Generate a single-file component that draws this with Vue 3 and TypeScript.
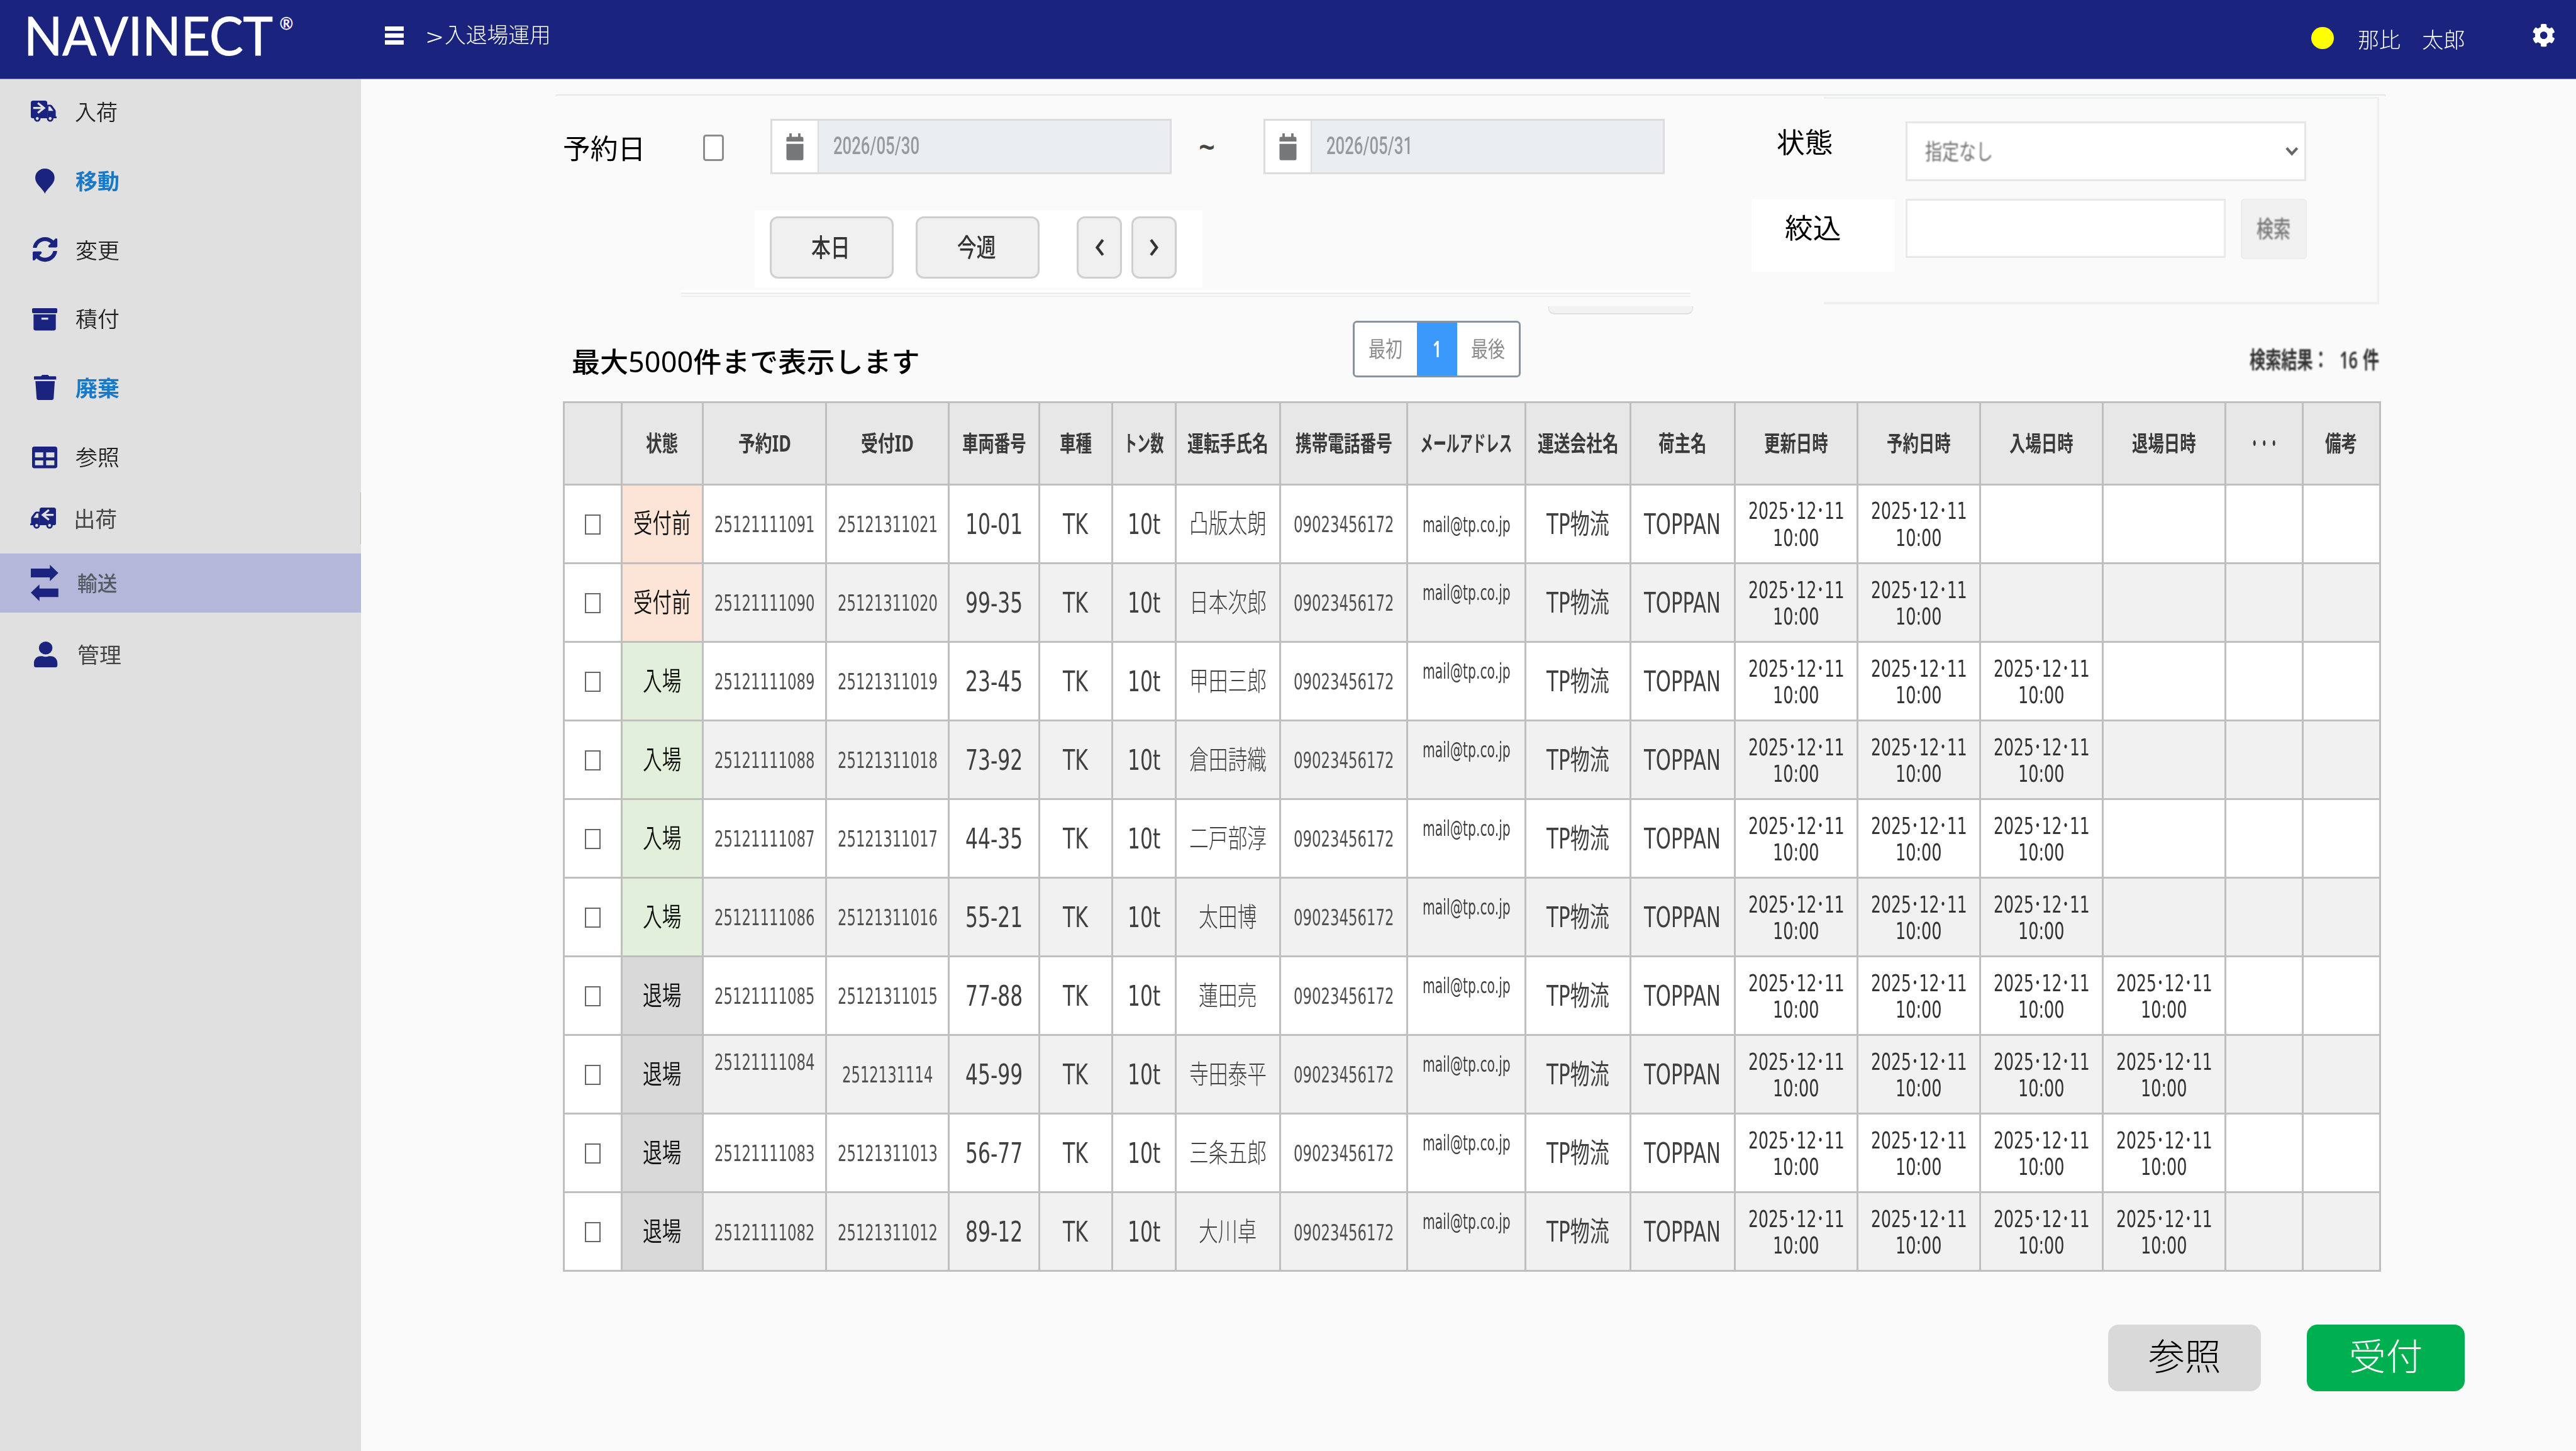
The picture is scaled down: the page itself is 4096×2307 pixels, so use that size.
<script setup lang="ts">
import type { Directive } from 'vue'

// The page is designed on a 4395-unit wide canvas; 1rem equals 100 units.
const UNIT = 4096 / 4395

// Condenses or widens a text run to a given width in canvas units.
const applyFit = (el: HTMLElement, units: number) => {
  el.style.transform = 'none'
  el.style.marginRight = '0'
  const natural = el.getBoundingClientRect().width
  if (!natural) return
  const target = units * UNIT
  el.style.transform = `scaleX(${target / natural})`
  el.style.marginRight = `${target - natural}px`
}
const vFit: Directive<HTMLElement, number> = {
  mounted(el, binding) {
    el.classList.add('fit')
    applyFit(el, binding.value)
    requestAnimationFrame(() => applyFit(el, binding.value))
  },
}

interface MenuItem {
  id: string
  label: string
  height: number
  icon: { x: number; w: number; h: number; dy: number }
  text: { x: number; w: number; dy: number }
  kind?: string
}
const menu: MenuItem[] = [
  { id: 'in', label: '入荷', height: 117, icon: { x: 53, w: 44, h: 36, dy: -4 }, text: { x: 128, w: 73, dy: -2 } },
  { id: 'pin', label: '移動', height: 118, icon: { x: 60, w: 33, h: 43, dy: -2 }, text: { x: 129, w: 75, dy: -2 }, kind: 'link' },
  { id: 'sync', label: '変更', height: 118, icon: { x: 56, w: 42, h: 42, dy: -3 }, text: { x: 129, w: 75, dy: -2 } },
  { id: 'box', label: '積付', height: 117, icon: { x: 55, w: 43, h: 38, dy: -2 }, text: { x: 129, w: 75, dy: -2 } },
  { id: 'trash', label: '廃棄', height: 117, icon: { x: 58, w: 38, h: 43, dy: -2 }, text: { x: 129, w: 75, dy: -1 }, kind: 'link' },
  { id: 'grid', label: '参照', height: 118, icon: { x: 55, w: 43, h: 37, dy: -1 }, text: { x: 129, w: 75, dy: -1 } },
  { id: 'out', label: '出荷', height: 104, icon: { x: 51, w: 44, h: 36, dy: -8 }, text: { x: 126, w: 74, dy: -7 }, kind: 'soft' },
  { id: 'swap', label: '輸送', height: 101, icon: { x: 53, w: 47, h: 62, dy: 0 }, text: { x: 132, w: 68, dy: 2 }, kind: 'active' },
  { id: 'user', label: '管理', height: 148, icon: { x: 58, w: 40, h: 44, dy: -3 }, text: { x: 132, w: 75, dy: -2 }, kind: 'soft' },
]

const edges = [962.4, 1060.7, 1200, 1409.7, 1618.7, 1774, 1898, 2006.4, 2185, 2401.8, 2603.3, 2781.9, 2960, 3169.3, 3378.7, 3588, 3797, 3929, 4061]
const colWidths = edges.slice(1).map((e, i) => Math.round(e * UNIT) - Math.round(edges[i] * UNIT))
const tableWidth = colWidths.reduce((a, b) => a + b, 0)

const heads: [string, number][] = [
  ['', 0], ['状態', 55], ['予約ID', 90], ['受付ID', 90], ['車両番号', 109], ['車種', 55], ['トン数', 68],
  ['運転手氏名', 138], ['携帯電話番号', 165], ['メールアドレス', 157], ['運送会社名', 138], ['荷主名', 82],
  ['更新日時', 109], ['予約日時', 109], ['入場日時', 109], ['退場日時', 109], ['・・・', 50], ['備考', 55],
]

type Status = 'before' | 'entered' | 'left'
const statusText: Record<Status, [string, number]> = {
  before: ['受付前', 98],
  entered: ['入場', 66],
  left: ['退場', 66],
}
interface Row { status: Status; id: string; rid: string; plate: string; driver: string; stamps: number }
const rows: Row[] = [
  { status: 'before', id: '25121111091', rid: '25121311021', plate: '10-01', driver: '凸版太朗', stamps: 2 },
  { status: 'before', id: '25121111090', rid: '25121311020', plate: '99-35', driver: '日本次郎', stamps: 2 },
  { status: 'entered', id: '25121111089', rid: '25121311019', plate: '23-45', driver: '甲田三郎', stamps: 3 },
  { status: 'entered', id: '25121111088', rid: '25121311018', plate: '73-92', driver: '倉田詩織', stamps: 3 },
  { status: 'entered', id: '25121111087', rid: '25121311017', plate: '44-35', driver: '二戸部淳', stamps: 3 },
  { status: 'entered', id: '25121111086', rid: '25121311016', plate: '55-21', driver: '太田博', stamps: 3 },
  { status: 'left', id: '25121111085', rid: '25121311015', plate: '77-88', driver: '蓮田亮', stamps: 4 },
  { status: 'left', id: '25121111084', rid: '2512131114', plate: '45-99', driver: '寺田泰平', stamps: 4 },
  { status: 'left', id: '25121111083', rid: '25121311013', plate: '56-77', driver: '三条五郎', stamps: 4 },
  { status: 'left', id: '25121111082', rid: '25121311012', plate: '89-12', driver: '大川卓', stamps: 4 },
]
const rem = (n: number) => `${n / 100}rem`
</script>

<template>
  <div class="app">
    <header class="bar">
      <div class="logo"><span v-fit="425" class="logo-name">NAVINECT</span><span class="logo-mark">®</span></div>
      <div class="burger"><i></i><i></i><i></i></div>
      <span v-fit="28" class="gt">&gt;</span>
      <span v-fit="181" class="crumb">入退場運用</span>
      <div class="account">
        <span class="dot"></span>
        <span v-fit="183" class="crumb">那比　太郎</span>
        <svg class="gear" viewBox="12 8 488 496" preserveAspectRatio="none"><path fill="#fff" d="M487.400 315.700l-42.600-24.600c4.300-23.200 4.300-47 0-70.200l42.600-24.600c4.900-2.800 7.100-8.600 5.500-14-11.100-35.600-30-67.800-54.700-94.600-3.800-4.100-10-5.100-14.800-2.300L380.800 110c-17.900-15.400-38.500-27.300-60.800-35.100V25.800c0-5.600-3.900-10.500-9.400-11.700-36.700-8.200-74.300-7.800-109.200 0-5.500 1.200-9.400 6.100-9.400 11.700V75c-22.200 7.900-42.800 19.800-60.800 35.100L88.700 85.500c-4.900-2.800-11-1.900-14.800 2.300-24.700 26.700-43.600 58.900-54.700 94.600-1.700 5.400.6 11.200 5.500 14L67.300 221c-4.300 23.200-4.300 47 0 70.200l-42.600 24.600c-4.900 2.800-7.100 8.600-5.500 14 11.100 35.600 30 67.800 54.700 94.600 3.800 4.100 10 5.100 14.800 2.300l42.600-24.600c17.900 15.400 38.500 27.300 60.800 35.100v49.200c0 5.600 3.900 10.500 9.400 11.700 36.700 8.200 74.300 7.800 109.200 0 5.500-1.200 9.400-6.100 9.400-11.700v-49.200c22.200-7.900 42.800-19.800 60.800-35.100l42.600 24.600c4.900 2.800 11 1.900 14.800-2.300 24.700-26.700 43.600-58.900 54.700-94.600 1.500-5.500-.7-11.300-5.600-14.100zM256 336c-44.100 0-80-35.900-80-80s35.900-80 80-80 80 35.900 80 80-35.900 80-80 80z" /></svg>
      </div>
    </header>

    <div class="body">
      <aside class="side">
        <div v-for="m in menu" :key="m.id" class="item" :class="m.kind" :style="{ height: rem(m.height) }">
          <div class="slot" :style="{ width: rem(m.text.x), paddingLeft: rem(m.icon.x), marginTop: rem(m.icon.dy * 2) }">
            <svg :style="{ width: rem(m.icon.w), height: rem(m.icon.h) }" :viewBox="`0 0 ${m.icon.w} ${m.icon.h}`" fill="#1a237e">
              <g v-if="m.id === 'in' || m.id === 'out'" :transform="m.id === 'out' ? 'translate(44 0) scale(-1 1)' : undefined">
                <path d="M4 0h20a4 4 0 0 1 4 4v26H3a3 3 0 0 1-3-3V4a4 4 0 0 1 4-4z" />
                <path d="M28 7h4.500c1.800 0 3.200.7 4.300 2l4.600 6.300c.8 1 1.100 2 1.100 3.200V27h1.500v3H28z" />
                <path fill="#e0e0e0" d="M30 10h3l5.500 7.500H30z" />
                <circle cx="11" cy="30.500" r="5.500" /><circle cx="33" cy="30.500" r="5.500" />
                <circle cx="11" cy="30.500" r="2.500" fill="#e0e0e0" /><circle cx="33" cy="30.500" r="2.500" fill="#e0e0e0" />
                <path d="M4 12.500h18M12 4l10.500 8.500L12 21" fill="none" stroke="#e0e0e0" stroke-width="3.600" />
              </g>
              <path v-else-if="m.id === 'pin'" d="M16.500 43C14 35 0 27 0 16A16.500 16 0 0 1 33 16C33 27 19 35 16.500 43z" />
              <svg v-else-if="m.id === 'sync'" viewBox="8 8 496 496"><path d="M370.720 133.280C339.458 104.008 298.888 87.962 255.848 88c-77.458.068-144.328 53.178-162.791 126.850-1.344 5.363-6.122 9.150-11.651 9.150H24.103c-7.498 0-13.194-6.807-11.807-14.176C33.933 94.924 134.813 8 256 8c66.448 0 126.791 26.136 171.315 68.685L463.030 40.970C478.149 25.851 504 36.559 504 57.941V192c0 13.255-10.745 24-24 24H345.941c-21.382 0-32.090-25.851-16.971-40.971l41.750-41.749zM32 296h134.059c21.382 0 32.090 25.851 16.971 40.971l-41.750 41.750c31.262 29.273 71.835 45.319 114.876 45.280 77.418-.07 144.315-53.144 162.787-126.849 1.344-5.363 6.122-9.150 11.651-9.150h57.304c7.498 0 13.194 6.807 11.807 14.176C478.067 417.076 377.187 504 256 504c-66.448 0-126.791-26.136-171.315-68.685L48.970 471.030C33.851 486.149 8 475.441 8 454.059V320c0-13.255 10.745-24 24-24z" /></svg>
              <g v-else-if="m.id === 'box'">
                <rect width="43" height="8.500" rx="2" />
                <path fill-rule="evenodd" d="M2.500 10.500h38V35a3 3 0 0 1-3 3h-32a3 3 0 0 1-3-3zM16 16v3.500h11.500V16z" />
              </g>
              <g v-else-if="m.id === 'trash'">
                <path d="M1.500 2.500H12L13.500 .6c.4-.4.800-.6 1.400-.6h8.200c.6 0 1 .2 1.400.6L26 2.500h10.500a1.500 1.500 0 0 1 1.500 1.500v4H0V4a1.500 1.500 0 0 1 1.500-1.500z" />
                <path d="M2.500 10.700h33L33.600 40a3.500 3.500 0 0 1-3.500 3H8a3.500 3.500 0 0 1-3.500-3z" />
              </g>
              <path v-else-if="m.id === 'grid'" fill-rule="evenodd" d="M4 0h35a4 4 0 0 1 4 4v29a4 4 0 0 1-4 4H4a4 4 0 0 1-4-4V4a4 4 0 0 1 4-4zM5 10v8.500h14V10zM24 10v8.500h14V10zM5 23.500V32h14v-8.500zM24 23.500V32h14v-8.500z" />
              <path v-else-if="m.id === 'swap'" d="M0 6.500h32.500V0L47 14 32.500 28v-6.500H0zM47 40.500H14.700v-7L0 47.500 14.700 62v-7H47z" />
              <g v-else>
                <ellipse cx="20" cy="11" rx="11.500" ry="11" />
                <path d="M11.500 25h3c3.500 1.500 7.500 1.500 11 0h3C35 25 40 30 40 36.500v4a3.500 3.500 0 0 1-3.500 3.500h-33A3.500 3.500 0 0 1 0 40.500v-4C0 30 5 25 11.500 25z" />
              </g>
            </svg>
          </div>
          <span v-fit="m.text.w" class="item-text" :style="{ marginTop: rem(m.text.dy * 2) }">{{ m.label }}</span>
        </div>
      </aside>

      <main class="main">
        <div class="rule"></div>
        <section class="filters">
          <div class="left">
            <div class="date-row">
              <span v-fit="141" class="label">予約日</span>
              <span class="check"></span>
              <div class="date">
                <div class="cal"><svg viewBox="0 0 29 46"><path d="M5 0h4v6h11V0h4v6h2a3 3 0 0 1 3 3v5H0V9a3 3 0 0 1 3-3h2zM0 18h29v25a3 3 0 0 1-3 3H3a3 3 0 0 1-3-3z" /></svg></div>
                <div class="val"><span v-fit="147">2026/05/30</span></div>
              </div>
              <span class="tilde">~</span>
              <div class="date second">
                <div class="cal"><svg viewBox="0 0 29 46"><path d="M5 0h4v6h11V0h4v6h2a3 3 0 0 1 3 3v5H0V9a3 3 0 0 1 3-3h2zM0 18h29v25a3 3 0 0 1-3 3H3a3 3 0 0 1-3-3z" /></svg></div>
                <div class="val"><span v-fit="147">2026/05/31</span></div>
              </div>
            </div>
            <div class="quick">
              <button class="btn wide"><span v-fit="66">本日</span></button>
              <button class="btn wide week"><span v-fit="66">今週</span></button>
              <button class="btn slim"><svg viewBox="0 0 16 30"><path d="M13.500 2.500L4 15l9.500 12.500" /></svg></button>
              <button class="btn slim next"><svg viewBox="0 0 16 30"><path d="M2.500 2.500L12 15 2.500 27.500" /></svg></button>
            </div>
            <div class="strip"></div>
          </div>
          <div class="right">
            <div class="cond">
              <div class="cond-label"><span v-fit="96" class="label">状態</span></div>
              <div class="select"><span v-fit="116">指定なし</span><svg viewBox="0 0 22 16"><path d="M2 2.500L11 12.500 20 2.500" /></svg></div>
            </div>
            <div class="cond second-cond">
              <div class="cond-label box"><span v-fit="96" class="label">絞込</span></div>
              <div class="input"></div>
              <button class="find"><span v-fit="58">検索</span></button>
            </div>
          </div>
        </section>

        <div class="stub"></div>
        <div class="tools">
          <span v-fit="594" class="notice">最大5000件まで表示します</span>
          <div class="pager">
            <div class="pg"><span v-fit="58">最初</span></div>
            <div class="pg on"><span v-fit="15">1</span></div>
            <div class="pg"><span v-fit="58">最後</span></div>
          </div>
          <div class="count"><span v-fit="135">検索結果：</span><span v-fit="31" class="hits">16</span><span v-fit="28">件</span></div>
        </div>

        <table class="list" :style="{ width: tableWidth + 'px' }">
          <colgroup><col v-for="(w, i) in colWidths" :key="i" :style="{ width: w + 'px' }" /></colgroup>
          <thead>
            <tr>
              <th v-for="(h, i) in heads" :key="i"><div class="cell"><span v-if="h[0]" v-fit="h[1]">{{ h[0] }}</span></div></th>
            </tr>
          </thead>
          <tbody>
            <tr v-for="(r, i) in rows" :key="r.id">
              <td class="pick"><div class="cell"><span class="tick"></span></div></td>
              <td :class="r.status"><div class="cell st"><span v-fit="statusText[r.status][1]">{{ statusText[r.status][0] }}</span></div></td>
              <td><div class="cell num" :class="{ raised: i === 7 }"><span v-fit="171">{{ r.id }}</span></div></td>
              <td><div class="cell num"><span v-fit="r.rid.length * 15.5">{{ r.rid }}</span></div></td>
              <td><div class="cell big"><span v-fit="98">{{ r.plate }}</span></div></td>
              <td><div class="cell big"><span v-fit="43">TK</span></div></td>
              <td><div class="cell big"><span v-fit="56">10t</span></div></td>
              <td><div class="cell name"><span v-fit="r.driver.length * 33">{{ r.driver }}</span></div></td>
              <td><div class="cell num"><span v-fit="171">09023456172</span></div></td>
              <td><div class="cell mail" :class="{ lifted: i > 0 }"><span v-fit="150">mail@tp.co.jp</span></div></td>
              <td><div class="cell big"><span v-fit="107">TP物流</span></div></td>
              <td><div class="cell big"><span v-fit="131">TOPPAN</span></div></td>
              <td v-for="n in 4" :key="n">
                <div class="cell stamp"><template v-if="n <= r.stamps"><span v-fit="164">2025･12･11</span><span v-fit="79">10:00</span></template></div>
              </td>
              <td></td>
              <td></td>
            </tr>
          </tbody>
        </table>

        <div class="actions">
          <button class="act view"><span v-fit="124">参照</span></button>
          <button class="act accept"><span v-fit="126">受付</span></button>
        </div>
      </main>
    </div>
  </div>
</template>

<style>
html {
  font-size: 93.1968px;
  overflow: hidden;
}
body {
  margin: 0;
  background: #fafafa;
}
</style>

<style scoped>
.app {
  width: 43.95rem;
  height: 24.75rem;
  overflow: hidden;
  display: flex;
  flex-direction: column;
  background: #fafafa;
  font-family: "Noto Sans", "Noto Sans CJK JP", sans-serif;
  font-size: 0.36rem;
  line-height: 1;
  color: #222;
}
.app * { box-sizing: border-box; }
.fit {
  display: inline-block;
  flex: none;
  white-space: pre;
  transform-origin: 0 50%;
}
button { font-family: inherit; padding: 0; line-height: 1; }
svg { display: block; overflow: visible; flex: none; }

.bar {
  flex: none;
  height: 1.35rem;
  background: #1a237e;
  border-bottom: 0.011rem solid #8086b6;
  display: flex;
  color: #fff;
}
.logo { display: flex; width: 6.57rem; padding-left: 0.41rem; }
.logo-name {
  font-family: Lato, sans-serif;
  font-size: 0.905rem;
  line-height: 1.21rem;
  -webkit-text-stroke: 0.011rem #fff;
}
.logo-mark { font-family: Lato, sans-serif; font-size: 0.28rem; margin: 0.26rem 0 0 0.11rem; -webkit-text-stroke: 0.005rem #fff; }
.burger { width: 0.32rem; margin-top: 0.455rem; display: flex; flex-direction: column; gap: 0.05rem; }
.burger i { height: 0.068rem; background: #fff; }
.gt { margin: 0.4rem 0 0 0.385rem; font-family: "Noto Sans CJK JP", sans-serif; font-weight: 300; font-size: 0.44rem; }
.crumb { font-family: "Noto Sans", "Noto Sans CJK JP", sans-serif; font-weight: 300; margin-top: 0.42rem; }
.gt + .crumb { margin-left: 0.03rem; }
.account { margin-left: auto; display: flex; margin-right: 0.365rem; }
.account .crumb { margin-top: 0.5rem; }
.dot { width: 0.38rem; height: 0.38rem; border-radius: 50%; background: #ff0; margin: 0.46rem 0.41rem 0 0; }
.gear { width: 0.38rem; height: 0.39rem; margin: 0.41rem 0 0 1.15rem; }

.body { flex: 1; display: flex; min-height: 0; }
.side { flex: none; width: 6.155rem; background: #e0e0e0; }
.item { display: flex; align-items: center; }
.slot { flex: none; }
.item-text { font-size: 0.365rem; color: #222; font-weight: 350; }
.link .item-text { font-weight: 700; color: #1a78c8; }
.soft .item-text { color: #444; font-weight: 400; }
.soft:nth-child(7) { background: linear-gradient(#b4b6da, #b4b6da) 100% 0 / 0.012rem 0.88rem no-repeat; }
.active { background: #b4b6da; }
.active .item-text { color: #555a60; font-weight: 500; font-size: 0.35rem; }

.main { flex: 1; min-width: 0; padding-left: 3.47rem; display: flex; flex-direction: column; }
.rule { flex: none; height: 0.04rem; width: 31.21rem; margin: 0.255rem 0 0 -0.14rem; border: solid #e2e9ee; border-width: 0.022rem 0.011rem 0; }
.filters { flex: none; height: 3.57rem; display: flex; }
.left { flex: none; width: 20.26rem; }
.date-row { display: flex; align-items: center; height: 0.94rem; margin-top: 0.385rem; margin-left: -0.02rem; }
.label { font-size: 0.47rem; color: #000; }
.date-row .label { margin-top: 0.08rem; width: auto; }
.check { width: 0.35rem; height: 0.45rem; border: 0.033rem solid #8c8c8c; border-radius: 0.05rem; margin: 0.04rem 0.8rem 0 0.98rem; background: #fff; }
.date { display: flex; width: 6.84rem; height: 0.94rem; border: 0.033rem solid #dcdcdc; background: #fff; }
.cal { width: 0.79rem; display: flex; align-items: center; justify-content: center; border-right: 0.022rem solid #dcdcdc; }
.cal svg { width: 0.3rem; height: 0.46rem; fill: #757778; }
.val { flex: 1; background: #eaeef2; display: flex; align-items: center; padding-left: 0.25rem; font-family: Roboto, "Liberation Sans", sans-serif; font-size: 0.42rem; font-weight: 500; color: #96999d; }
.tilde { width: 1.575rem; padding-left: 0.47rem; font-size: 0.48rem; font-weight: 700; color: #444; }
.quick { display: flex; width: 7.64rem; height: 1.33rem; margin: 0.61rem 0 0 3.25rem; padding: 0.11rem 0 0 0.26rem; background: #fff; }
.btn { height: 1.06rem; border: 0.035rem solid #cfcfcf; border-radius: 0.14rem; background: #f0f0f0; display: flex; align-items: center; justify-content: center; font-size: 0.43rem; font-weight: 500; color: #333; }
.wide span { margin-left: -0.04rem; }
.btn.wide { width: 2.11rem; }
.week { margin-left: 0.38rem; }
.slim { width: 0.77rem; margin-left: 0.64rem; }
.next { margin-left: 0.16rem; }
.slim svg { width: 0.18rem; height: 0.31rem; fill: none; stroke: #333; stroke-width: 4.5; }
.strip { width: 17.22rem; height: 0.115rem; margin: 0.04rem 0 0 2rem; background: linear-gradient(#fff 0 40%, #eceff0 40% 62%, #fff 62% 80%, #eceff0 80%); }

.right { position: relative; width: 10.73rem; padding-top: 0.425rem; }
.right::before {
  content: "";
  position: absolute;
  left: 1.23rem;
  right: 0.02rem;
  top: 0.01rem;
  height: 3.46rem;
  border: solid #eeefef;
  border-width: 0.035rem 0.035rem 0.045rem 0;
}
.cond { position: relative; display: flex; height: 1.02rem; }
.cond-label { width: 2.44rem; margin-right: 0.19rem; padding: 0.13rem 0 0 0.43rem; }
.select { width: 6.83rem; border: 0.033rem solid #e6e6e6; background: #fff; display: flex; align-items: center; justify-content: space-between; padding: 0 0.1rem 0 0.3rem; font-size: 0.38rem; color: #707070; }
.select span, .find span, .count { filter: blur(0.014rem); }
.select svg { width: 0.22rem; height: 0.16rem; fill: none; stroke: #666; stroke-width: 4.5; }
.second-cond { margin-top: 0.3rem; height: 1.24rem; }
.box { background: #fff; height: 1.235rem; margin-top: 0.015rem; padding: 0.255rem 0 0 0.57rem; }
.input { width: 5.46rem; height: 1.01rem; border: 0.033rem solid #e9e9e9; background: #fff; }
.find { width: 1.12rem; height: 1.03rem; margin-left: 0.26rem; border: 0.022rem solid #ececec; border-radius: 0.06rem; background: #f1f1f1; font-size: 0.4rem; font-weight: 500; color: #777; display: flex; align-items: center; justify-content: center; }

.stub { flex: none; width: 2.47rem; height: 0.145rem; margin: 0.01rem 0 0 16.79rem; background: #f2f2f2; border: solid #dedede; border-width: 0 0.02rem 0.025rem; border-radius: 0 0 0.1rem 0.1rem; }
.tools { flex: none; display: flex; align-items: center; height: 0.97rem; margin-top: 0.105rem; padding-left: 0.13rem; width: 30.97rem; }
.notice { font-size: 0.48rem; color: #000; font-weight: 450; margin-top: 0.42rem; }
.pager { display: flex; width: 2.86rem; height: 0.97rem; border: 0.033rem solid #8694a2; border-radius: 0.07rem; background: #fff; overflow: hidden; margin: -0.01rem 0 0 7.39rem; color: #8c8c8c; font-size: 0.38rem; }
.pg { flex: 1; display: flex; align-items: center; justify-content: center; }
.pg.on { flex: none; width: 0.69rem; background: #3b99fc; color: #fff; font-weight: 600; }
.count { margin-left: auto; display: flex; color: #333; font-weight: 600; font-size: 0.4rem; margin-top: 0.35rem; }
.hits { margin-left: 0.18rem; }
.hits + span { margin-left: 0.09rem; }

.list { flex: none; border-collapse: collapse; table-layout: fixed; margin: 0.405rem 0 0 -0.022rem; background: #fff; }
.list th, .list td { padding: 0; border: 0.033rem solid #bfbfbf; }
.list tr { height: 1.342rem; }
.list thead tr { height: 1.397rem; }
.list th { background: #e7e7e7; }
.list tbody tr:nth-child(even) td { background: #f1f1f1; }
.list tbody tr td.pick { background: #fff; }
.list tbody tr td.before { background: #fce4d6; }
.list tbody tr td.entered { background: #e2efda; }
.list tbody tr td.left { width: auto; background: #d9d9d9; }
.cell { display: flex; flex-direction: column; align-items: center; justify-content: center; }
th .cell { font-size: 0.38rem; font-weight: 700; color: #3a3a3a; padding-bottom: 0.01rem; }
td .cell { font-family: "DejaVu Sans", "Noto Sans CJK JP", sans-serif; color: #404040; padding-top: 0.025rem; }
.tick { width: 0.26rem; height: 0.345rem; border: 0.022rem solid #666; }
td .st { font-size: 0.455rem; color: #111; font-weight: 350; }
td .num { font-size: 0.38rem; color: #505050; }
td .big { font-size: 0.475rem; }
td .name { font-size: 0.455rem; font-weight: 300; }
td .mail { font-size: 0.365rem; }
td .stamp { font-size: 0.405rem; line-height: 0.453rem; color: #333; }
td .raised { padding: 0 0 0.42rem; }
td .lifted { padding: 0 0 0.34rem; }

.actions { flex: none; display: flex; gap: 0.78rem; margin: 0.905rem 0 0 26.34rem; }
.act { height: 1.13rem; border: 0; border-radius: 0.18rem; font-size: 0.62rem; font-weight: 300; display: flex; align-items: center; justify-content: center; }
.act span { margin-top: -0.06rem; }
.view { width: 2.61rem; background: #d9d9d9; color: #000; }
.accept { width: 2.7rem; background: #00b050; color: #fff; }
</style>
